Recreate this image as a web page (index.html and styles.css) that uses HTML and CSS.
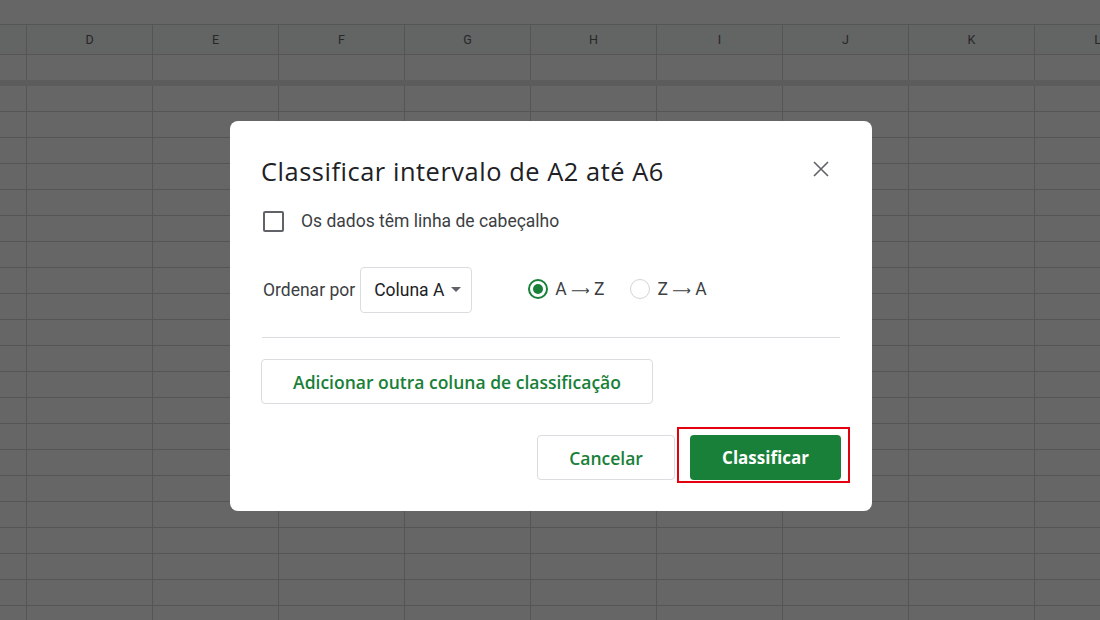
FILE: index.html
```html
<!DOCTYPE html>
<html lang="pt-BR">
<head>
    <meta charset="UTF-8">
    <title>Classificar intervalo</title>
    <link rel="stylesheet" href="styles.css">
</head>
<body>
    <div class="sheet">
        <div class="toolbar"></div>
        <div class="col-head">
            <div class="cell first"></div>
            <div class="cell">D</div>
            <div class="cell">E</div>
            <div class="cell">F</div>
            <div class="cell">G</div>
            <div class="cell">H</div>
            <div class="cell">I</div>
            <div class="cell">J</div>
            <div class="cell">K</div>
            <div class="cell">L</div>
        </div>
        <div class="frozen-row">
            <div class="cell first"></div>
            <div class="cell"></div>
            <div class="cell"></div>
            <div class="cell"></div>
            <div class="cell"></div>
            <div class="cell"></div>
            <div class="cell"></div>
            <div class="cell"></div>
            <div class="cell"></div>
            <div class="cell"></div>
        </div>
        <div class="freeze-bar"></div>
        <div class="rows"></div>
    </div>

    <div class="overlay">
        <div class="dialog">
            <div class="dialog-head">
                <h2 class="title">Classificar intervalo de A2 até A6</h2>
                <button class="close" aria-label="Fechar">
                    <svg width="24" height="24" viewBox="0 0 24 24">
                        <path d="M5 5 L19 19 M19 5 L5 19" stroke="#5f6368" stroke-width="1.6" fill="none"/>
                    </svg>
                </button>
            </div>

            <label class="check-row">
                <span class="checkbox"></span>
                <span>Os dados têm linha de cabeçalho</span>
            </label>

            <div class="sort-row">
                <span class="sort-label">Ordenar por</span>
                <div class="select">
                    <span>Coluna A</span>
                    <span class="caret"></span>
                </div>
                <div class="radios">
                    <label class="radio-item">
                        <span class="radio checked"></span>
                        <span>A <span class="arrow">⟶</span> Z</span>
                    </label>
                    <label class="radio-item">
                        <span class="radio"></span>
                        <span>Z <span class="arrow">⟶</span> A</span>
                    </label>
                </div>
            </div>

            <hr class="divider">

            <div class="add-row">
                <button class="btn btn-outline add-btn">Adicionar outra coluna de classificação</button>
            </div>

            <div class="footer">
                <button class="btn btn-outline cancel-btn">Cancelar</button>
                <div class="highlight">
                    <button class="btn btn-primary">Classificar</button>
                </div>
            </div>
        </div>
    </div>
</body>
</html>
```

FILE: styles.css
```css
* {
    margin: 0;
    padding: 0;
    box-sizing: border-box;
}

body {
    width: 1100px;
    height: 620px;
    overflow: hidden;
    font-family: Roboto, "Liberation Sans", Arial, sans-serif;
    background: #ffffff;
}

/* planilha ao fundo */
.sheet {
    display: flex;
    flex-direction: column;
    height: 620px;
    overflow: hidden;
}

.toolbar {
    height: 25px;
    border-bottom: 1px solid #d4d4d4;
    background: #ffffff;
}

.col-head,
.frozen-row {
    display: flex;
    white-space: nowrap;
    overflow: hidden;
}

.col-head {
    height: 30px;
    background: #f8f9fa;
    border-bottom: 1px solid #d4d4d4;
}

.frozen-row {
    height: 25px;
}

.cell {
    flex: 0 0 126px;
    border-right: 1px solid #d4d4d4;
    display: flex;
    align-items: center;
    justify-content: center;
    font-size: 12.5px;
    color: #5f6368;
}

    .cell.first {
        flex-basis: 27px;
    }

.freeze-bar {
    height: 6px;
    background: #e6e6e6;
}

.rows {
    flex: 1;
    background:
        linear-gradient(to right, #d4d4d4 1px, transparent 1px) 26px 0 / 126px 100%,
        linear-gradient(to bottom, transparent 25px, #d4d4d4 25px) 0 0 / 100% 26px;
}

/* janela modal */
.overlay {
    position: fixed;
    inset: 0;
    background: rgba(0, 0, 0, 0.6);
    display: flex;
    justify-content: center;
    align-items: flex-start;
    padding-top: 121px;
    padding-left: 2px;
}

.dialog {
    width: 642px;
    height: 390px;
    background: #ffffff;
    border-radius: 8px;
    padding: 34px 32px 0;
    display: flex;
    flex-direction: column;
}

.dialog-head {
    display: flex;
    justify-content: space-between;
    align-items: flex-start;
}

.title {
    font-family: "Open Sans", Roboto, sans-serif;
    font-size: 25.4px;
    line-height: 32px;
    font-weight: 400;
    letter-spacing: 0.55px;
    color: #202124;
    margin-left: -1px;
}

.close {
    border: none;
    background: none;
    width: 24px;
    height: 24px;
    margin-top: 2px;
    margin-right: 7px;
    cursor: pointer;
}

    .close svg {
        display: block;
    }

.check-row {
    margin-top: 22px;
    display: flex;
    align-items: center;
    gap: 17px;
    font-size: 17.5px;
    line-height: 24px;
    color: #3c4043;
}

.checkbox {
    width: 21px;
    height: 21px;
    border: 2px solid #5f6368;
    border-radius: 2px;
    margin-left: 1px;
}

.sort-row {
    margin-top: 34px;
    display: flex;
    align-items: center;
    font-size: 17.5px;
    color: #3c4043;
}

.sort-label {
    margin-left: 1px;
    margin-right: 5px;
}

.select {
    width: 112px;
    height: 46px;
    border: 1px solid #dadce0;
    border-radius: 4px;
    display: flex;
    align-items: center;
    justify-content: space-between;
    padding: 0 10px 0 13px;
    color: #202124;
}

.caret {
    width: 0;
    height: 0;
    border-left: 5px solid transparent;
    border-right: 5px solid transparent;
    border-top: 5px solid #5f6368;
    margin-bottom: 2px;
}

.radios {
    display: flex;
    align-items: center;
    gap: 26px;
    margin-left: 56px;
    margin-top: -3px;
}

.radio-item {
    display: flex;
    align-items: center;
    gap: 7px;
    color: #3c4043;
}

.arrow {
    font-family: "DejaVu Sans", sans-serif;
    font-size: 13px;
}

.radio {
    width: 20px;
    height: 20px;
    border-radius: 50%;
    border: 1.5px solid #d3d3d3;
    display: flex;
    align-items: center;
    justify-content: center;
}

    .radio.checked {
        border: 2px solid #188038;
    }

        .radio.checked::after {
            content: "";
            width: 10px;
            height: 10px;
            border-radius: 50%;
            background: #188038;
        }

.divider {
    margin-top: 24px;
    border: none;
    border-top: 1px solid #dadce0;
}

.add-row {
    margin-top: 21px;
}

.btn {
    font-family: "Open Sans", Roboto, sans-serif;
    font-size: 17.5px;
    font-weight: 600;
    border-radius: 4px;
    cursor: pointer;
}

.btn-outline {
    background: #ffffff;
    border: 1px solid #dadce0;
    color: #188038;
}

.add-btn {
    width: 392px;
    height: 45px;
    margin-left: -1px;
}

.footer {
    margin-top: 31px;
    display: flex;
    justify-content: flex-end;
    gap: 15px;
    margin-right: -1px;
}

.cancel-btn {
    width: 138px;
    height: 45px;
}

.btn-primary {
    width: 151px;
    height: 45px;
    background: #188038;
    border: none;
    color: #ffffff;
    font-size: 17px;
    font-weight: 700;
}

.highlight {
    position: relative;
    display: flex;
}

    .highlight::after {
        content: "";
        position: absolute;
        left: -13px;
        right: -9px;
        top: -8px;
        bottom: -3px;
        border: 2px solid #e3000f;
        pointer-events: none;
    }
```
